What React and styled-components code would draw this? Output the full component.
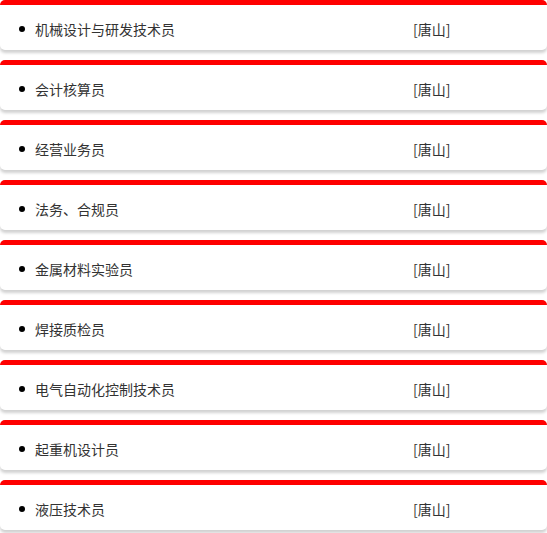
import React from 'react';
import styled, { createGlobalStyle } from "styled-components";

const Global = createGlobalStyle`
    body {
        margin: 0;
        background: #fff;
        font-family: "Microsoft YaHei", "Noto Sans CJK SC", "Noto Sans", sans-serif;
    }
`;

const List = styled.ul`
    list-style: none;
    margin: 0;
    padding: 0;
`;

const Item = styled.li`
    display: grid;
    grid-template-columns: 35px 378px 1fr;
    align-items: center;
    height: 42px;
    padding-top: 3px;
    border-top: 5px solid #ff0000;
    border-radius: 5px;
    background: #fff;
    box-shadow: 0 3px 3px rgba(0, 0, 0, 0.18);
    margin-bottom: 10px;
    font-size: 14px;
    color: #333;
`;

const Dot = styled.span`
    justify-self: start;
    margin-left: 19px;
    width: 6px;
    height: 6px;
    border-radius: 50%;
    background: #000;
`;

const Name = styled.span`
    white-space: nowrap;
`;

const Place = styled.span`
    white-space: nowrap;
`;

function App() {
    const jobs = [
        "机械设计与研发技术员",
        "会计核算员",
        "经营业务员",
        "法务、合规员",
        "金属材料实验员",
        "焊接质检员",
        "电气自动化控制技术员",
        "起重机设计员",
        "液压技术员"
    ];

    return (
        <>
            <Global />
            <List>
                {jobs.map((j) =>
                    <Item key={j}>
                        <Dot />
                        <Name>{j}</Name>
                        <Place>[唐山]</Place>
                    </Item>
                )}
            </List>
        </>
    )
}

export default App;
